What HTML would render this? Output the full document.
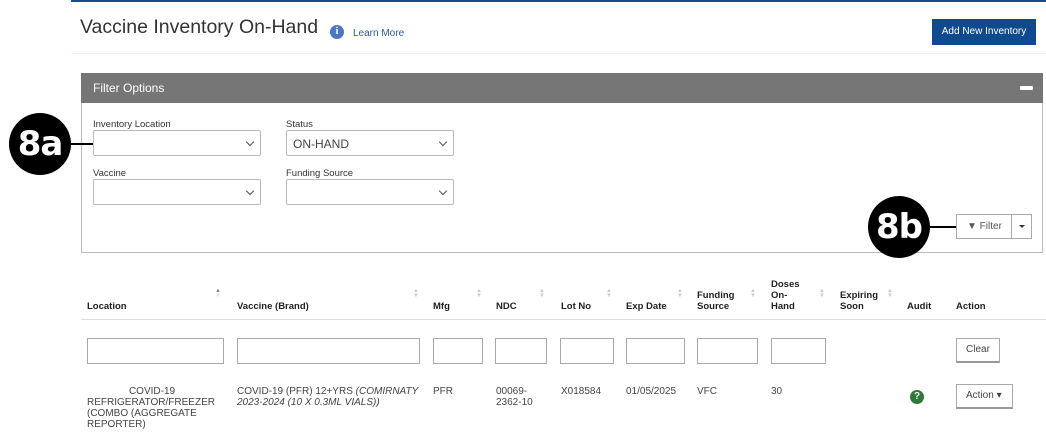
<!DOCTYPE html>
<html><head><style>
*{box-sizing:border-box;margin:0;padding:0}
body{width:1046px;height:433px;background:#fff;position:relative;overflow:hidden;font-family:"Liberation Sans",sans-serif;color:#333}
.a{position:absolute}
.lbl{font-size:9.5px;color:#333}
.sel{position:absolute;height:26px;border:1px solid #bbb;border-radius:2px;background:#fff;font-size:12px;padding:6px 6px}
.sel:after{content:"";position:absolute;right:7px;top:8px;width:5px;height:5px;border-right:1px solid #555;border-bottom:1px solid #555;transform:rotate(45deg)}
.th{position:absolute;font-size:9.5px;font-weight:bold;color:#222;line-height:11px}
.sort{position:absolute;font-size:6px;color:#ccc;line-height:5px}
.in{position:absolute;height:26px;top:338px;border:1px solid #aaa;background:#fff}
.td{position:absolute;font-size:10px;color:#444;line-height:11px;top:386px}
.circ{position:absolute;width:62px;height:62px;border-radius:50%;background:#000;color:#fff;font-weight:bold;font-size:34px;text-align:center;line-height:62px;font-family:"DejaVu Sans",sans-serif;letter-spacing:-1px}
</style></head><body>
<div class="a" style="left:71px;top:0;width:975px;height:2px;background:#1d4a8a"></div>
<div class="a" style="left:80px;top:16px;font-size:19.5px;color:#333">Vaccine Inventory On-Hand</div>
<div class="a" style="left:330px;top:25px;width:14px;height:14px;border-radius:50%;background:#4a78c0;color:#fff;font-size:10px;font-weight:bold;text-align:center;line-height:14px;font-family:serif">i</div>
<div class="a" style="left:353px;top:28px;font-size:10px;color:#2a5aa0">Learn More</div>
<div class="a" style="left:932px;top:19px;width:104px;height:26px;background:#0f4a8f;color:#fff;font-size:10px;text-align:center;line-height:26px">Add New Inventory</div>
<div class="a" style="left:71px;top:53px;width:975px;height:1px;background:#f2f2f2"></div>
<div class="a" style="left:81px;top:73px;width:962px;height:180px;border:1px solid #bbb;border-top:none"></div>
<div class="a" style="left:81px;top:73px;width:962px;height:30px;background:#767676"></div>
<div class="a" style="left:93px;top:81px;font-size:12px;color:#fff">Filter Options</div>
<div class="a" style="left:1020px;top:86px;width:13px;height:4px;background:#fff;border-radius:1px"></div>
<div class="a lbl" style="left:93px;top:119px">Inventory Location</div>
<div class="sel" style="left:93px;top:130px;width:168px"></div>
<div class="a lbl" style="left:286px;top:119px">Status</div>
<div class="sel" style="left:286px;top:130px;width:168px;color:#444">ON-HAND</div>
<div class="a lbl" style="left:93px;top:168px">Vaccine</div>
<div class="sel" style="left:93px;top:179px;width:168px"></div>
<div class="a lbl" style="left:286px;top:168px">Funding Source</div>
<div class="sel" style="left:286px;top:179px;width:168px"></div>
<div class="a" style="left:60px;top:143px;width:33px;height:1.5px;background:#000"></div>
<div class="circ" style="left:9px;top:113px">8a</div>
<div class="a" style="left:920px;top:226px;width:37px;height:1.5px;background:#000"></div>
<div class="circ" style="left:868px;top:196px">8b</div>
<div class="a" style="left:956px;top:214px;width:76px;height:25px;border:1px solid #aaa;background:#fff;font-size:10px;color:#555;line-height:23px;padding-left:10px">&#9660; Filter</div>
<div class="a" style="left:1011px;top:214px;width:1px;height:25px;background:#aaa"></div>
<div class="a" style="left:1019px;top:225px;border:3px solid transparent;border-top:3px solid #333"></div>
<div class="th" style="left:87px;top:301px">Location</div>
<div class="th" style="left:237px;top:301px">Vaccine (Brand)</div>
<div class="th" style="left:433px;top:301px">Mfg</div>
<div class="th" style="left:496px;top:301px">NDC</div>
<div class="th" style="left:561px;top:301px">Lot No</div>
<div class="th" style="left:626px;top:301px">Exp Date</div>
<div class="th" style="left:697px;top:290px">Funding<br>Source</div>
<div class="th" style="left:771px;top:279px">Doses<br>On-<br>Hand</div>
<div class="th" style="left:840px;top:290px">Expiring<br>Soon</div>
<div class="th" style="left:907px;top:301px">Audit</div>
<div class="th" style="left:956px;top:301px">Action</div>
<div class="sort" style="left:215px;top:289px;color:#888">▲<br><span style="color:#ddd">▼</span></div>
<div class="sort" style="left:413px;top:289px">▲<br>▼</div>
<div class="sort" style="left:476px;top:289px">▲<br>▼</div>
<div class="sort" style="left:539px;top:289px">▲<br>▼</div>
<div class="sort" style="left:606px;top:289px">▲<br>▼</div>
<div class="sort" style="left:677px;top:289px">▲<br>▼</div>
<div class="sort" style="left:750px;top:289px">▲<br>▼</div>
<div class="sort" style="left:819px;top:289px">▲<br>▼</div>
<div class="sort" style="left:887px;top:289px">▲<br>▼</div>
<div class="a" style="left:81px;top:319px;width:965px;height:1px;background:#ddd"></div>
<div class="in" style="left:87px;width:137px"></div>
<div class="in" style="left:237px;width:183px"></div>
<div class="in" style="left:433px;width:50px"></div>
<div class="in" style="left:495px;width:52px"></div>
<div class="in" style="left:560px;width:54px"></div>
<div class="in" style="left:626px;width:59px"></div>
<div class="in" style="left:697px;width:61px"></div>
<div class="in" style="left:771px;width:55px"></div>
<div class="a" style="left:956px;top:338px;width:44px;height:25px;border:1px solid #aaa;border-bottom:2px solid #999;font-size:10px;color:#444;text-align:center;line-height:22px">Clear</div>
<div class="td" style="left:87px;width:130px;text-align:center">COVID-19<br><span style="display:block;text-align:left">REFRIGERATOR/FREEZER<br>(COMBO (AGGREGATE<br>REPORTER)</span></div>
<div class="td" style="left:237px">COVID-19 (PFR) 12+YRS <i>(COMIRNATY<br>2023-2024 (10 X 0.3ML VIALS))</i></div>
<div class="td" style="left:433px">PFR</div>
<div class="td" style="left:496px">00069-<br>2362-10</div>
<div class="td" style="left:561px">X018584</div>
<div class="td" style="left:626px">01/05/2025</div>
<div class="td" style="left:697px">VFC</div>
<div class="td" style="left:771px">30</div>
<div class="a" style="left:910px;top:390px;width:14px;height:14px;border-radius:50%;background:#2e7a3a;color:#fff;font-size:10px;font-weight:bold;text-align:center;line-height:14px">?</div>
<div class="a" style="left:956px;top:384px;width:57px;height:25px;border:1px solid #aaa;border-bottom:2px solid #999;font-size:10px;color:#444;line-height:22px;padding-left:9px">Action ▾</div>
</body></html>
